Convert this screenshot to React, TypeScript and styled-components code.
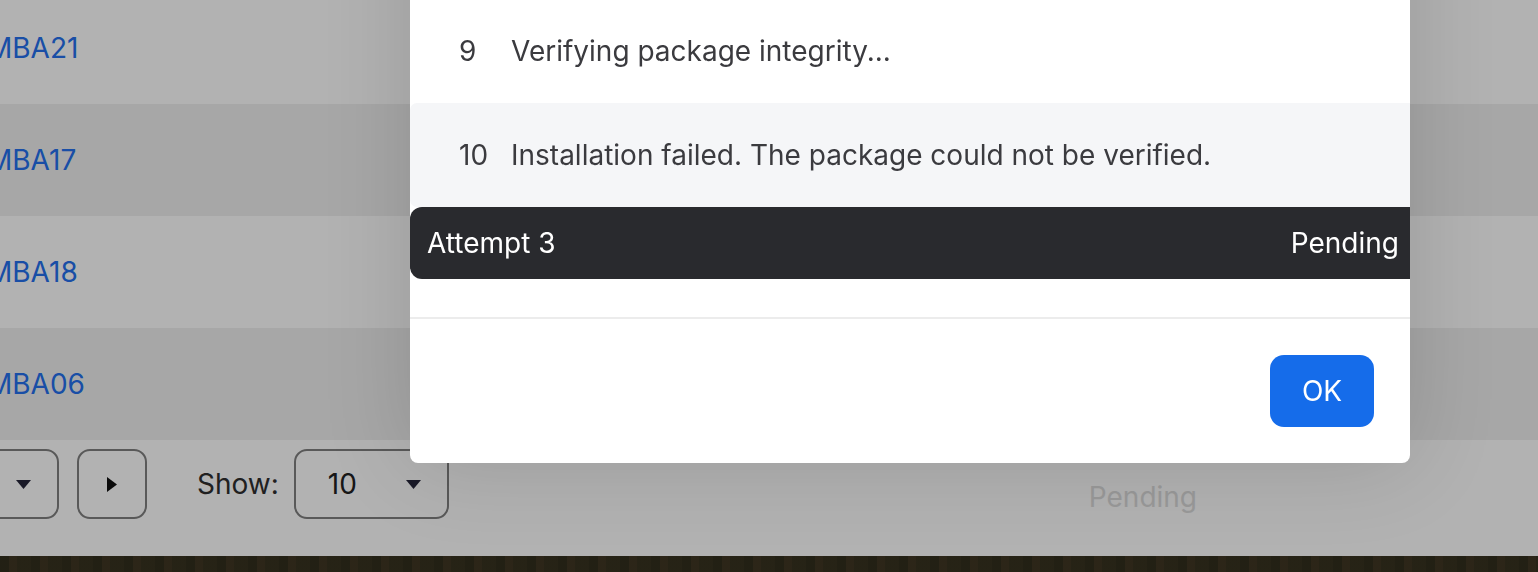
import styled, { createGlobalStyle } from 'styled-components';

const GlobalStyle = createGlobalStyle`
  html, body {
    margin: 0;
    padding: 0;
    height: 100%;
    overflow: hidden;
  }
  body {
    font-family: Inter, "Noto Sans", sans-serif;
    background:
      repeating-linear-gradient(90deg, rgba(20, 30, 10, 0.2) 0 9px, rgba(90, 70, 40, 0.18) 9px 17px, rgba(40, 50, 20, 0.15) 17px 31px),
      #3a3322;
  }
`;

const Page = styled.div`
  width: 100%;
  height: 556px;
  background: #fff;
  overflow: hidden;
  display: flex;
  flex-direction: column;
`;

const Table = styled.div`
  display: flex;
  flex-direction: column;
  margin-top: -8px;
  margin-left: -13px;
`;

const Row = styled.div<{ $striped?: boolean }>`
  height: 112px;
  display: flex;
  align-items: center;
  background: ${({ $striped }) => ($striped ? '#f0f0f0' : '#fff')};
`;

const IdLink = styled.a`
  font-size: 28px;
  color: #2470ee;
  text-decoration: none;
`;

const Pager = styled.div`
  height: 116px;
  box-sizing: border-box;
  padding-top: 9px;
  display: flex;
  align-items: flex-start;
`;

const BoxButton = styled.button<{ $width: number }>`
  width: ${({ $width }) => $width}px;
  height: 70px;
  box-sizing: border-box;
  border: 2px solid #808080;
  border-radius: 13px;
  background: transparent;
  display: flex;
  align-items: center;
  justify-content: space-between;
  padding: 0 26px 0 32px;
  font-family: Inter, sans-serif;
  font-size: 28px;
  color: #222;
`;

const PageSelect = styled(BoxButton)`
  margin-left: -51px;
  justify-content: flex-end;
  padding-right: 26px;
`;

const NextButton = styled(BoxButton)`
  margin-left: 18px;
  justify-content: center;
  padding: 0;
`;

const ShowLabel = styled.span`
  margin-left: 50px;
  margin-right: 15px;
  font-size: 28px;
  line-height: 70px;
  color: #2e2e2e;
`;

const FadedStatus = styled.span`
  margin-left: 640px;
  margin-top: 31px;
  font-size: 28px;
  color: #dcdcdc;
`;

const Backdrop = styled.div`
  position: fixed;
  inset: 0;
  background: rgba(0, 0, 0, 0.3);
`;

const Modal = styled.div`
  position: fixed;
  left: 410px;
  bottom: 109px;
  width: 1000px;
  background: #fff;
  border-radius: 8px;
  overflow: hidden;
  box-shadow: 0 0 90px rgba(0, 0, 0, 0.14);
`;

const LogRow = styled.div<{ $shaded?: boolean }>`
  height: 104px;
  display: flex;
  align-items: center;
  padding-left: 49px;
  font-size: 28px;
  color: #3b3b3f;
  background: ${({ $shaded }) => ($shaded ? '#f5f6f8' : '#fff')};
  border-radius: ${({ $shaded }) => ($shaded ? '7px 0 0 7px' : '0')};
`;

const LogNum = styled.span`
  width: 52px;
  flex: none;
`;

const AttemptBar = styled.div`
  height: 72px;
  display: flex;
  align-items: center;
  justify-content: space-between;
  padding: 0 11px 0 17px;
  background: #292a2e;
  color: #fff;
  font-size: 28px;
  border-radius: 12px 0 0 12px;
`;

const Spacer = styled.div`
  height: 38px;
`;

const Footer = styled.div`
  border-top: 2px solid #ececec;
  padding: 36px 36px 36px;
  display: flex;
  justify-content: flex-end;
`;

const OkButton = styled.button`
  width: 104px;
  height: 72px;
  border: none;
  border-radius: 14px;
  background: #156cea;
  color: #fff;
  font-family: Inter, sans-serif;
  font-size: 28px;
`;

const Caret = () => (
  <svg width="15" height="9" viewBox="0 0 15 9">
    <polygon points="0,0 15,0 7.5,9" fill="#26263a" />
  </svg>
);

const RightArrow = () => (
  <svg width="10" height="15" viewBox="0 0 10 15">
    <polygon points="0,0 10,7.5 0,15" fill="#111" />
  </svg>
);

const ids = ['MBA21', 'MBA17', 'MBA18', 'MBA06'];

const logs = [
  { n: 8, text: 'Downloading package...' },
  { n: 9, text: 'Verifying package integrity...' },
  { n: 10, text: 'Installation failed. The package could not be verified.' },
];

const App = () => (
  <>
    <GlobalStyle />
    <Page>
      <Table>
        {ids.map((id, i) => (
          <Row key={id} $striped={i % 2 === 1}>
            <IdLink>{id}</IdLink>
          </Row>
        ))}
      </Table>
      <Pager>
        <PageSelect $width={110}>
          <Caret />
        </PageSelect>
        <NextButton $width={70}>
          <RightArrow />
        </NextButton>
        <ShowLabel>Show:</ShowLabel>
        <BoxButton $width={155}>
          <span>10</span>
          <Caret />
        </BoxButton>
        <FadedStatus>Pending</FadedStatus>
      </Pager>
    </Page>
    <Backdrop />
    <Modal>
      {logs.map((l) => (
        <LogRow key={l.n} $shaded={l.n === 10}>
          <LogNum>{l.n}</LogNum>
          <span>{l.text}</span>
        </LogRow>
      ))}
      <AttemptBar>
        <span>Attempt 3</span>
        <span>Pending</span>
      </AttemptBar>
      <Spacer />
      <Footer>
        <OkButton>OK</OkButton>
      </Footer>
    </Modal>
  </>
);

export default App;
